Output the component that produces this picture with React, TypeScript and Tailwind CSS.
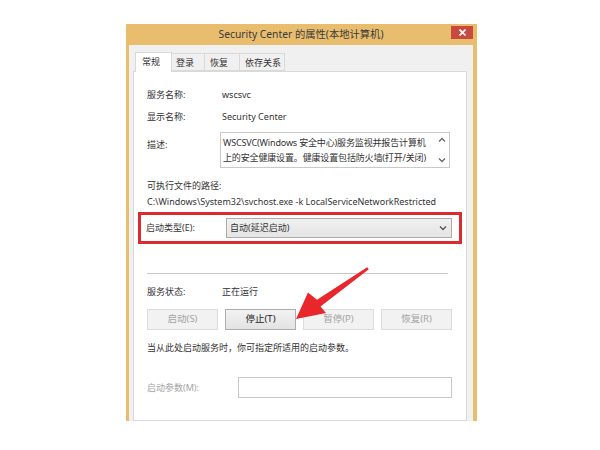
import React from "react";

const F = { fontFamily: '"Noto Sans", "Noto Sans CJK SC", sans-serif' } as React.CSSProperties;

function Btn({ label, active }: { label: string; active?: boolean }) {
  return (
    <div
      className={
        "w-[71px] h-[21px] flex items-center justify-center text-[9.5px] border " +
        (active
          ? "border-[#adadad] bg-[linear-gradient(#f2f2f2,#e3e3e3)] text-[#222]"
          : "border-[#dcdcdc] bg-[#f2f2f2] text-[#a3a3a3]")
      }
    >
      {label}
    </div>
  );
}

export default function App() {
  return (
    <div className="w-[600px] h-[450px] bg-white relative overflow-hidden" style={F}>
      <div className="ml-[126px] pt-[24px] w-[351px]">
        <div className="h-[397px] flex flex-col bg-[#e9bd6e] pl-[3px] pr-[4px] overflow-hidden">
          {/* title bar */}
          <div className="h-[21px] relative flex items-center justify-center text-[10.3px] text-[#3a3a3a] shrink-0">
            <span>Security Center 的属性(本地计算机)</span>
            <div className="absolute right-[0px] top-[2px] w-[22px] h-[13px] bg-[#c9483f] flex items-center justify-center">
              <svg width="7" height="7" viewBox="0 0 7 7">
                <path d="M0.5 0.5 L6.5 6.5 M6.5 0.5 L0.5 6.5" stroke="#fff" strokeWidth="1.6" />
              </svg>
            </div>
          </div>
          {/* body */}
          <div className="flex-1 bg-[#f0f0f0] pl-[4px] pr-[6px] pt-[7px] flex flex-col">
            {/* tabs */}
            <div className="flex items-end ml-[2px] h-[19px] relative z-10 text-[9px] text-[#333] whitespace-nowrap">
              <div className="h-[20px] w-[37px] bg-white border border-b-0 border-[#d9d9d9] pl-[6px] leading-[18px] -mb-[1px]">常规</div>
              <div className="h-[18px] w-[33px] bg-[#f0f0f0] border border-l-0 border-[#d9d9d9] pl-[4px] leading-[17px]">登录</div>
              <div className="h-[18px] w-[35px] bg-[#f0f0f0] border border-l-0 border-[#d9d9d9] pl-[5px] leading-[17px]">恢复</div>
              <div className="h-[18px] w-[45px] bg-[#f0f0f0] border border-l-0 border-[#d9d9d9] pl-[5px] leading-[17px]">依存关系</div>
            </div>
            {/* panel */}
            <div className="flex-1 bg-white border border-[#d9d9d9] pl-[13px] pr-[14px] flex flex-col text-[9px] text-[#333] whitespace-nowrap">
              <div className="mt-[15px] h-[16px] flex items-center">
                <span className="w-[75px]">服务名称:</span>
                <span>wscsvc</span>
              </div>
              <div className="mt-[6px] h-[16px] flex items-center">
                <span className="w-[75px]">显示名称:</span>
                <span>Security Center</span>
              </div>
              <div className="mt-[7px] h-[36px] flex">
                <span className="w-[73px] mt-[5px] leading-[16px]">描述:</span>
                <div className="flex-1 mr-[2px] border border-[#c9c9c9] flex">
                  <div className="flex-1 pl-[2px] pt-[2px] leading-[15px] tracking-[-0.15px] text-[#333] overflow-hidden">
                    <div>WSCSVC(Windows 安全中心)服务监视并报告计算机</div>
                    <div>上的安全健康设置。健康设置包括防火墙(打开/关闭)</div>
                  </div>
                  <div className="w-[14px] flex flex-col items-center justify-between py-[4px]">
                    <svg width="8" height="5" viewBox="0 0 8 5"><path d="M1 4.5 L4 1.5 L7 4.5" stroke="#666" strokeWidth="1.3" fill="none" /></svg>
                    <svg width="8" height="5" viewBox="0 0 8 5"><path d="M1 0.5 L4 3.5 L7 0.5" stroke="#666" strokeWidth="1.3" fill="none" /></svg>
                  </div>
                </div>
              </div>
              <div className="mt-[10px] h-[16px] flex items-center">可执行文件的路径:</div>
              <div className="h-[16px] flex items-center">C:\Windows\System32\svchost.exe -k LocalServiceNetworkRestricted</div>
              <div className="mt-[2px] -ml-[9px] -mr-[10px] h-[32px] border-[3px] border-[#db2b30] pl-[5px] pr-[7px] py-[3px] flex items-center">
                <span className="w-[80px]">启动类型(E):</span>
                <div className="flex-1 h-[20px] border border-[#acacac] bg-[linear-gradient(#f0f0f0,#e5e5e5)] flex items-center pl-[3px] pr-[4px] justify-between">
                  <span>自动(延迟启动)</span>
                  <svg width="8" height="5" viewBox="0 0 8 5"><path d="M1 0.5 L4 3.5 L7 0.5" stroke="#555" strokeWidth="1.3" fill="none" /></svg>
                </div>
              </div>
              <div className="mt-[29px] h-px bg-[#c8c8c8] mr-[4px]" />
              <div className="mt-[10px] h-[16px] flex items-center">
                <span className="w-[75px]">服务状态:</span>
                <span>正在运行</span>
              </div>
              <div className="mt-[9px] flex justify-between">
                <Btn label="启动(S)" />
                <Btn label="停止(T)" active />
                <Btn label="暂停(P)" />
                <Btn label="恢复(R)" />
              </div>
              <div className="mt-[10px] h-[16px] flex items-center">当从此处启动服务时，你可指定所适用的启动参数。</div>
              <div className="mt-[21px] h-[21px] flex items-center">
                <span className="w-[91px] text-[#a3a3a3]">启动参数(M):</span>
                <div className="flex-1 h-[21px] border border-[#c9c9c9] bg-white" />
              </div>
            </div>
          </div>
        </div>
      </div>
      <svg className="absolute left-0 top-0" width="600" height="450" viewBox="0 0 600 450">
        <polygon
          points="368.8,269.2 367.2,267.3 317,299.8 308,292.5 296,319 326,313 320.5,306.5"
          fill="#e8262b"
        />
      </svg>
    </div>
  );
}
